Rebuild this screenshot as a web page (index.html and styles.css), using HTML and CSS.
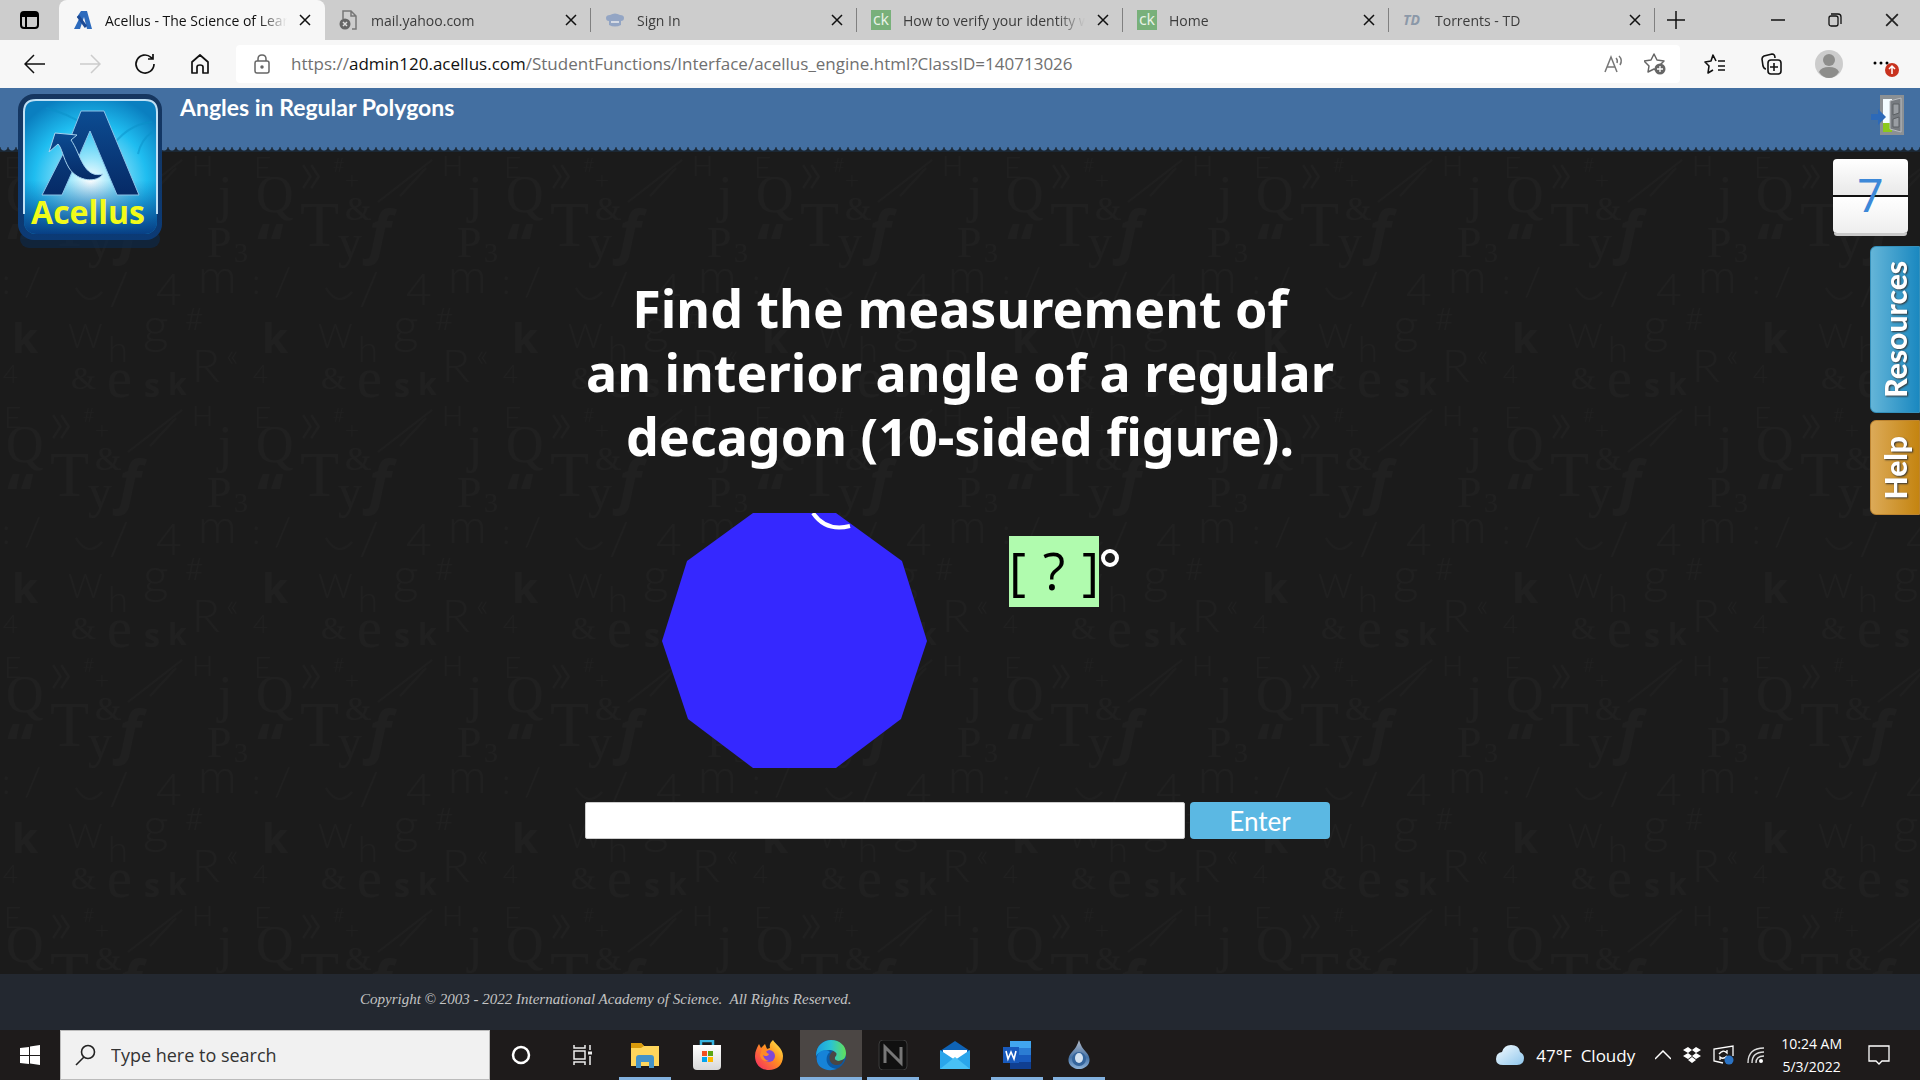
FILE: index.html
```html
<!DOCTYPE html>
<html lang="en">
<head>
<meta charset="utf-8">
<title>Acellus - The Science of Learning</title>
<link rel="stylesheet" href="styles.css">
</head>
<body>
<svg class="sprites" aria-hidden="true">
  <defs>
    <symbol id="i-x" viewBox="0 0 12 12"><path d="M1 1l10 10M11 1L1 11" fill="none" stroke="currentColor" stroke-width="1.5"/></symbol>
    <symbol id="i-a" viewBox="0 0 20 20"><path d="M8 1h6l5 18h-5L11 7 7 19H1L6 9 4 7z" fill="#2d6bbd"/><path d="M5 6l8 11" stroke="#1d4a94" stroke-width="3"/></symbol>
    <linearGradient id="g-navy" x1="0" y1="0" x2="0" y2="1"><stop offset="0" stop-color="#0c4c92"/><stop offset="1" stop-color="#062a66"/></linearGradient>
    <radialGradient id="g-sky" cx=".5" cy=".6" r=".65"><stop offset="0" stop-color="#fff"/><stop offset=".25" stop-color="#9be6fb"/><stop offset=".65" stop-color="#1fbdf0"/><stop offset="1" stop-color="#0a7fc0"/></radialGradient>
    <linearGradient id="g-frame" x1="0" y1="0" x2="0" y2="1"><stop offset="0" stop-color="#16365f"/><stop offset="1" stop-color="#0b3a75"/></linearGradient>
    <linearGradient id="g-shade" x1="0" y1="0" x2="0" y2="1"><stop offset=".6" stop-color="#0a5aa8" stop-opacity="0"/><stop offset="1" stop-color="#083f84"/></linearGradient>
    <linearGradient id="g-fire" x1="1" y1="0" x2="0" y2="1"><stop offset="0" stop-color="#fff44f"/><stop offset=".45" stop-color="#ff9020"/><stop offset="1" stop-color="#f5206a"/></linearGradient>
    <linearGradient id="g-edge" x1="0" y1="0" x2="1" y2="0"><stop offset="0" stop-color="#1b9de2"/><stop offset=".5" stop-color="#2bc3d2"/><stop offset="1" stop-color="#62e05a"/></linearGradient>
    <linearGradient id="g-drop" x1="0" y1="0" x2="0" y2="1"><stop offset="0" stop-color="#b5bcc8"/><stop offset=".6" stop-color="#4774a8"/><stop offset="1" stop-color="#8fb4da"/></linearGradient>
    <linearGradient id="g-cloud" x1="0" y1="0" x2="1" y2="1"><stop offset="0" stop-color="#f4fbff"/><stop offset="1" stop-color="#8fc6ec"/></linearGradient>
    <linearGradient id="g-ms" x1="0" y1="0" x2="0" y2="1"><stop offset="0" stop-color="#fff"/><stop offset="1" stop-color="#d8d8d8"/></linearGradient>
  </defs>
</svg>

<header class="browser">
  <div class="tabbar">
    <button class="tab-menu" aria-label="Tab actions"><svg width="20" height="20" viewBox="0 0 20 20"><rect x="1" y="2" width="17" height="16" rx="3" fill="none" stroke="#000" stroke-width="2"/><path d="M1 3h17v4H1z"/><path d="M6 7v11" stroke="#000" stroke-width="2"/></svg></button>
    <div class="tab tab-active"><svg class="fav"><use href="#i-a"/></svg><span class="tab-title">Acellus - The Science of Learning</span><button class="tab-close" aria-label="Close tab"><svg><use href="#i-x"/></svg></button></div>
    <div class="tab"><svg class="fav" viewBox="0 0 20 20"><path d="M4 9V1h8l5 5v13h-4M12 1v5h5" fill="none" stroke="#777" stroke-width="1.5"/><circle cx="6" cy="14" r="5.500" fill="#666"/><path d="M4 12l4 4M8 12l-4 4" stroke="#ddd" stroke-width="1.500"/></svg><span class="tab-title">mail.yahoo.com</span><button class="tab-close" aria-label="Close tab"><svg><use href="#i-x"/></svg></button></div>
    <div class="tab"><svg class="fav" viewBox="0 0 20 20"><path d="M1 8q0-3 4-3 5-3 10 0 4 0 4 3t-3 3v4q-6 3-12 0v-4q-3 0-3-3z" fill="#93a5c4"/><path d="M6 12h8" stroke="#d5dae4" stroke-width="2"/></svg><span class="tab-title">Sign In</span><button class="tab-close" aria-label="Close tab"><svg><use href="#i-x"/></svg></button></div>
    <div class="tab"><span class="fav fav-ck">ck</span><span class="tab-title">How to verify your identity with us</span><button class="tab-close" aria-label="Close tab"><svg><use href="#i-x"/></svg></button></div>
    <div class="tab"><span class="fav fav-ck">ck</span><span class="tab-title">Home</span><button class="tab-close" aria-label="Close tab"><svg><use href="#i-x"/></svg></button></div>
    <div class="tab"><span class="fav fav-td">TD</span><span class="tab-title">Torrents - TD</span><button class="tab-close" aria-label="Close tab"><svg><use href="#i-x"/></svg></button></div>
    <button class="tab-new" aria-label="New tab"><svg width="18" height="18" viewBox="0 0 18 18"><path d="M9 0v18M0 9h18" stroke="#111" stroke-width="1.500"/></svg></button>
    <div class="window-buttons">
      <button aria-label="Minimize"><svg width="14" height="14" viewBox="0 0 14 14"><path d="M0 7h14" stroke="#111" stroke-width="1.500"/></svg></button>
      <button aria-label="Restore"><svg width="14" height="14" viewBox="0 0 14 14" fill="none" stroke="#111" stroke-width="1.300"><rect x="1" y="3" width="9" height="10" rx="2"/><path d="M3 1h7q3 0 3 3v7"/></svg></button>
      <button aria-label="Close"><svg width="14" height="14" viewBox="0 0 12 12" color="#222"><use href="#i-x"/></svg></button>
    </div>
  </div>
  <nav class="toolbar">
    <div class="nav-buttons">
      <button aria-label="Back"><svg width="22" height="20" viewBox="0 0 22 20" fill="none" stroke="#111" stroke-width="1.500"><path d="M10 1L1 10l9 9M1 10h20"/></svg></button>
      <button aria-label="Forward"><svg width="22" height="20" viewBox="0 0 22 20" fill="none" stroke="#ccc" stroke-width="1.500"><path d="M12 1l9 9-9 9M21 10H1"/></svg></button>
      <button aria-label="Refresh"><svg width="22" height="22" viewBox="0 0 22 22" fill="none" stroke="#111" stroke-width="1.700"><path d="M20 11a9 9 0 1 1-3-6.700L19 6M19 1v5h-5"/></svg></button>
      <button aria-label="Home"><svg width="20" height="20" viewBox="0 0 20 20" fill="none" stroke="#111" stroke-width="1.700"><path d="M2 8l8-7 8 7v11h-5v-6q0-2-3-2t-3 2v6H2z" stroke-linejoin="round"/></svg></button>
    </div>
    <div class="address">
      <svg width="18" height="20" viewBox="0 0 18 20" fill="none" stroke="#666" stroke-width="1.500"><rect x="2" y="7" width="14" height="12" rx="2"/><path d="M5 7V5q0-4 4-4t4 4v2"/><circle cx="9" cy="13" r="1" fill="#666"/></svg>
      <span class="url">https://<b>admin120.acellus.com</b>/StudentFunctions/Interface/acellus_engine.html?ClassID=140713026</span>
      <button aria-label="Read aloud"><svg width="20" height="20" viewBox="0 0 20 20" fill="none" stroke="#777" stroke-width="1.500"><path d="M1 18L7 3l6 15M3 13h8M12 4q2 2 1 5M15 2q4 4 1 9"/></svg></button>
      <button aria-label="Add to favorites"><svg width="22" height="22" viewBox="0 0 22 22"><path d="M10 1l3 6 7 1-5 5 1 6-6-3-6 3 1-6-5-5 7-1z" fill="none" stroke="#666" stroke-width="1.500" stroke-linejoin="round"/><circle cx="16" cy="16" r="5.500" fill="#666"/><path d="M16 13v6M13 16h6" stroke="#fff" stroke-width="1.300"/></svg></button>
    </div>
    <div class="tool-buttons">
      <button aria-label="Favorites"><svg width="22" height="20" viewBox="0 0 22 20" fill="none" stroke="#111" stroke-width="1.600"><path d="M12 7l-3-6-2 6-6 1 4 4-1 7 5-3M14 7h7M14 12h7M14 16h7" stroke-linejoin="round"/></svg></button>
      <button aria-label="Collections"><svg width="22" height="22" viewBox="0 0 22 22" fill="none" stroke="#111" stroke-width="1.600"><path d="M5 16q-2 0-3-3L1 6q0-2 2-3l8-2q3 0 3 4"/><rect x="7" y="7" width="13" height="14" rx="3"/><path d="M13 10v8M9 14h8"/></svg></button>
      <button aria-label="Profile"><svg width="28" height="28" viewBox="0 0 28 28"><circle cx="14" cy="14" r="14" fill="#ccc"/><circle cx="14" cy="10" r="6" fill="#8d8d8b"/><path d="M4 22q2-5 10-5t10 5q-4 6-10 6T4 22z" fill="#8d8d8b"/></svg></button>
      <button aria-label="Settings"><svg width="28" height="28" viewBox="0 0 28 28"><circle cx="3" cy="13" r="1.500"/><circle cx="9" cy="13" r="1.500"/><circle cx="15" cy="13" r="1.500"/><circle cx="20" cy="20" r="7" fill="#c8321e"/><path d="M20 24v-8M17 19l3-3 3 3" fill="none" stroke="#fff" stroke-width="1.500"/></svg></button>
    </div>
  </nav>
</header>

<div class="lesson">
  <header class="lesson-header">
    <h1>Angles in Regular Polygons</h1>
    <button class="exit" aria-label="Exit"><svg width="36" height="42" viewBox="0 0 36 42"><path d="M9 0h24v40H9z" fill="#8b9094"/><path d="M12 4h9v26h-9z" fill="#f2fbff"/><path d="M12 28h9v9h-9z" fill="#8cc81c"/><path d="M19 6l11-3v34l-11-3z" fill="#777b80" stroke="#b9bcc0"/><path d="M22 9h6v9l-6 2zM22 24l6-2v10h-6z" fill="#9a9ea3" stroke="#5d6165"/><path d="M0 19h7v-5l8 8-8 8v-5H0z" fill="#2c69b8"/></svg></button>
    <svg class="logo" viewBox="0 0 144 156" role="img" aria-label="Acellus">
      <rect x="2" y="136" width="140" height="18" rx="9" fill="#0c2c50" opacity=".6"/>
      <rect width="144" height="146" rx="16" fill="url(#g-frame)"/>
      <rect x="6" y="6" width="133" height="134" rx="12" fill="url(#g-sky)"/>
      <rect x="6" y="6" width="133" height="134" rx="12" fill="url(#g-shade)"/>
      <path d="M28 14q46 12 62 44Q108 30 134 28M120 60q3-14 14-22" fill="none" stroke="#0a8fc8" stroke-width="2" opacity=".5"/>
      <path d="M6 120V18Q6 6 18 6h109q12 0 12 12v102" fill="none" stroke="#bfe0f5" stroke-width="2"/>
      <path d="M63 17h23l35 84H99L72 37 44 101H24l26-51z" fill="url(#g-navy)" stroke="#8ac3e8"/>
      <path d="M37 39l22 2-6 5c10 14 12 39 32 34-6 9-25 8-34-6-6-10-7-20-11-24l-9 8z" fill="url(#g-navy)" stroke="#a5d2ee"/>
      <text class="logo-name" x="70" y="130">Acellus</text>
    </svg>
  </header>

  <main class="stage">
    <svg class="wallpaper" aria-hidden="true">
      <pattern id="glyphs" width="250" height="250" patternUnits="userSpaceOnUse">
        <g class="sans"><text x="48" y="43" font-size="64">»</text><text x="95" y="38" font-size="24">+</text><text x="198" y="143" font-size="48">m</text><text x="2" y="144" font-size="36">:</text><text x="24" y="146" font-size="40">/</text><text x="109" y="155" font-size="46">/</text><text x="156" y="155" font-size="44">4</text><text x="185" y="180" font-size="32">#</text><text x="68" y="198" font-size="34">W</text><text x="108" y="212" font-size="36">h</text><text x="143" y="193" font-size="50">g</text><text x="192" y="232" font-size="46">R</text><text x="226" y="216" font-size="32">«</text><text x="3" y="233" font-size="26">4</text><text x="4" y="28" font-size="30">E</text><text x="192" y="26" font-size="28">H</text><text x="83" y="22" font-size="20">#</text></g>
        <g class="serif"><text x="6" y="62" font-size="52">Q</text><text x="50" y="96" font-size="64">T</text><text x="95" y="70" font-size="34">&amp;</text><text x="88" y="108" font-size="48">y</text><text x="207" y="107" font-size="44">P</text><text x="234" y="112" font-size="28">3</text><text x="218" y="62" font-size="52">j</text><text x="71" y="239" font-size="32">&amp;</text><text x="107" y="247" font-size="56">e</text></g>
        <g class="heavy"><text x="119" y="102" font-size="58" font-style="italic">f</text><text x="7" y="118" font-size="60">“</text><text x="12" y="203" font-size="42">k</text><text x="168" y="245" font-size="30">k</text><text x="144" y="247" font-size="32">s</text></g>
        <path d="M128 52L182 10M150 46L176 18M76 138q12 20 26 4"/>
      </pattern>
      <rect width="100%" height="100%" fill="url(#glyphs)"/>
    </svg>

    <section class="problem">
      <p class="question">Find the measurement of<br>an interior angle of a regular<br>decagon (10-sided figure).</p>
      <div class="figure-row">
        <svg width="266" height="256" viewBox="0 0 266 256" role="img" aria-label="Regular decagon">
          <path d="M91 0h83l66 48 25 80-26 78-65 49H91l-65-49L0 128l25-80z" fill="#3528ff"/>
          <path d="M151 0q13 19 37 13" fill="none" stroke="#fff" stroke-width="4"/>
        </svg>
        <div class="unknown"><span class="blank"><span>[</span><span>?</span><span>]</span></span><svg width="20" height="20" viewBox="0 0 20 20" role="img" aria-label="degrees"><circle cx="10" cy="10" r="7" fill="none" stroke="#fff" stroke-width="4"/></svg></div>
      </div>
      <form class="answer"><input type="text" aria-label="Answer"><button type="button">Enter</button></form>
    </section>

    <aside class="side">
      <div class="counter"><span>7</span></div>
      <button class="side-tab resources"><span>Resources</span></button>
      <button class="side-tab help"><span>Help</span></button>
    </aside>
  </main>

  <footer class="copyright">Copyright © 2003 - 2022 International Academy of Science.&nbsp; All Rights Reserved.</footer>
</div>

<footer class="taskbar">
  <button class="start" aria-label="Start"><svg width="20" height="20" viewBox="0 0 20 20" fill="#fff"><path d="M0 3l9-1v8H0zM10 1.500L20 0v10H10zM0 11h9v8l-9-1zM10 11h10v9l-10-1.500z"/></svg></button>
  <label class="search"><svg width="22" height="22" viewBox="0 0 22 22" fill="none" stroke="#222" stroke-width="1.600"><circle cx="13" cy="8" r="6.500"/><path d="M9 13l-8 8"/></svg><input type="text" placeholder="Type here to search" aria-label="Search"></label>
  <div class="apps">
    <button aria-label="Cortana"><svg width="20" height="20" viewBox="0 0 20 20"><circle cx="10" cy="10" r="8" fill="none" stroke="#fff" stroke-width="2.500"/></svg></button>
    <button aria-label="Task view"><svg width="20" height="20" viewBox="0 0 20 20" fill="none" stroke="#eee" stroke-width="1.500"><path d="M1 0v3h11V0M1 20v-3h11v3M1 6h11v8H1zM17 0v5M17 11v9"/><path d="M15 8h4" stroke-width="3"/></svg></button>
    <button class="open" aria-label="File Explorer"><svg width="28" height="26" viewBox="0 0 28 26"><path d="M0 1h10l3 3h15v20H0z" fill="#ffd65c"/><path d="M0 1h10l3 3-3 2H0z" fill="#d99a0b"/><path d="M5 26V16q0-3 3-3h12q3 0 3 3v10h-5v-6h-8v6z" fill="#4593c8"/></svg></button>
    <button aria-label="Microsoft Store"><svg width="28" height="30" viewBox="0 0 28 30"><path d="M8 6V1h12v5" fill="none" stroke="#36b3e0" stroke-width="2.500"/><path d="M0 5h28v21q0 4-4 4H4q-4 0-4-4z" fill="url(#g-ms)"/><path d="M9 11h5v5H9z" fill="#f25022"/><path d="M15 11h5v5h-5z" fill="#5ca614"/><path d="M9 17h5v5H9z" fill="#00a4ef"/><path d="M15 17h5v5h-5z" fill="#ffb900"/></svg></button>
    <button aria-label="Firefox"><svg width="28" height="30" viewBox="0 0 28 30"><path d="M14 30C5 30 0 24 0 16c0-5 2-8 4-12l2 4 4-4 2 5 3-1c-1-4 1-6 3-8 2 4 10 8 10 16 0 9-6 14-14 14z" fill="url(#g-fire)"/><circle cx="14" cy="16" r="6" fill="#8048d8"/><path d="M7 9q4-2 7 1c-4 1-3 3 0 4-1 3-5 2-6 1q1 5 6 6-8 1-9-6z" fill="#ff8a26"/></svg></button>
    <button class="open current" aria-label="Microsoft Edge"><svg width="30" height="32" viewBox="0 0 30 32"><circle cx="15" cy="16" r="15" fill="#0c59a4"/><path d="M0 17C0 6 8 1 15 1c9 0 15 6 15 13 0 6-4 8-8 8-4-1-4-2-3-4 2-3 0-7-5-7C7 11 2 14 0 17z" fill="url(#g-edge)"/><path d="M1 18c1-6 8-9 13-5-5 3-6 16 7 17C9 34-1 27 1 18z" fill="#1683d8"/><path d="M17 12q6 2 2 6-1 3 3 4 3 0 6-2-1 3-3 5-8 3-11-3-2-6 3-10z" fill="#4b4644"/></svg></button>
    <button class="open" aria-label="Notes"><svg width="30" height="30" viewBox="0 0 30 30"><rect x="1" width="28" height="30" rx="4" fill="#101010" stroke="#3a3a3a"/><path d="M7 23V7l16 16V7" fill="none" stroke="#777" stroke-width="3"/></svg></button>
    <button aria-label="Mail"><svg width="30" height="30" viewBox="0 0 30 30"><path d="M0 11L15 1l15 10v4H0z" fill="#0f63b5"/><path d="M3 10h24v12H3z" fill="#fff"/><path d="M0 10l15 10 15-10v19H0z" fill="#2aa5ea"/><path d="M0 29l15-12 15 12z" fill="#48c0f5"/></svg></button>
    <button class="open" aria-label="Word"><svg width="28" height="28" viewBox="0 0 28 28"><path d="M7 0h21v7H7z" fill="#41a5ee"/><path d="M7 7h21v7H7z" fill="#2b7cd3"/><path d="M7 14h21v7H7z" fill="#185abd"/><path d="M7 21h21v7H7z" fill="#103f91"/><rect y="6" width="16" height="16" fill="#185abd"/><path d="M3 10l2 8 3-7 3 7 2-8" fill="none" stroke="#fff" stroke-width="1.600"/></svg></button>
    <button class="open" aria-label="Rainmeter"><svg width="22" height="30" viewBox="0 0 22 30"><path d="M11 0q2 7 7 12c8 9 1 17-7 17S-4 21 4 12q5-5 7-12z" fill="url(#g-drop)"/><circle cx="11" cy="19" r="7" fill="#35659c"/><ellipse cx="11" cy="18" rx="4" ry="5" fill="#d5e3f1"/></svg></button>
  </div>
  <div class="tray">
    <div class="weather"><svg width="28" height="20" viewBox="0 0 28 20"><path d="M7 20q-7 0-7-6t6-7q2-7 9-7 8 0 9 7 4 2 4 6 0 7-7 7z" fill="url(#g-cloud)"/></svg><span>47°F&nbsp; Cloudy</span></div>
    <svg width="16" height="10" viewBox="0 0 16 10"><path d="M0 9l8-8 8 8" fill="none" stroke="#fff" stroke-width="1.500"/></svg>
    <svg width="18" height="16" viewBox="0 0 18 16" fill="#fff"><path d="M5 0l4 3-4 3-5-3zM13 0l5 3-5 3-4-3zM5 6l4 3-4 3-5-3zM13 6l5 3-5 3-4-3zM9 10l4 3-4 3-4-3z"/></svg>
    <svg width="22" height="20" viewBox="0 0 22 20" fill="none" stroke="#fff" stroke-width="1.300"><path d="M10 18L1 16V4l19-3v10M6 9q4-5 8-1V5M14 11q-4 4-7 1v3"/><circle cx="16" cy="15" r="4.500" fill="#2b73c4" stroke="none"/></svg>
    <svg width="18" height="16" viewBox="0 0 18 16" fill="none" stroke="#ddd" stroke-width="1.400"><path d="M1 16Q1 1 17 1M5 16Q5 5 17 5M9 16q0-7 8-7"/><circle cx="14" cy="14" r="2" fill="#fff" stroke="none"/></svg>
    <div class="clock"><span>10:24 AM</span><span>5/3/2022</span></div>
    <svg width="22" height="22" viewBox="0 0 22 22"><path d="M1 2h20v15h-7l-3 3-3-3H1z" fill="none" stroke="#fff" stroke-width="1.300"/></svg>
  </div>
</footer>
</body>
</html>
```
FILE: styles.css
```css
* { box-sizing: border-box; }

body {
  margin: 0;
  min-height: 100vh;
  display: flex;
  flex-direction: column;
  background: #1b1b1b;
  font-family: "Open Sans", "Noto Sans", sans-serif;
}

button {
  padding: 0;
  border: 0;
  background: none;
  font: inherit;
  color: inherit;
}

svg { display: block; flex: none; }
.sprites { position: absolute; width: 0; height: 0; }

/* Browser frame */
.tabbar {
  display: flex;
  height: 40px;
  background: #cdcdcd;
  font-size: 14px;
  color: #3c3c3c;
}
.tab-menu { width: 59px; display: grid; place-items: center; }
.tab {
  flex: 0 1 266px;
  min-width: 0;
  display: flex;
  align-items: center;
  gap: 12px;
  padding: 0 14px;
  background: linear-gradient(#808080, #808080) right 8px / 1px 24px no-repeat;
}
.tab-active {
  background: #f7f7f7;
  border-radius: 8px 8px 0 0;
  color: #111;
}
.fav { width: 20px; height: 20px; flex: none; }
.fav-ck {
  background: #78b07a;
  color: #e8f3e8;
  font-size: 16px;
  line-height: 18px;
  text-align: center;
}
.fav-td {
  color: #8b98a8;
  font-size: 14px;
  line-height: 20px;
  font-weight: 700;
  font-style: italic;
}
.tab-title {
  flex: 1;
  min-width: 0;
  overflow: hidden;
  white-space: nowrap;
  mask-image: linear-gradient(to left, transparent, #000 28px);
}
.tab-close { color: #111; }
.tab-close svg { width: 12px; height: 12px; }
.tab-new { width: 42px; display: grid; place-items: center; }
.window-buttons { display: flex; margin-left: auto; }
.window-buttons button { width: 57px; display: grid; place-items: center; }

.toolbar {
  display: flex;
  align-items: center;
  height: 48px;
  background: #f7f7f7;
}
.nav-buttons { display: flex; padding: 0 9px 0 7px; }
.nav-buttons button { width: 55px; display: grid; place-items: center; }
.address {
  flex: 1;
  min-width: 0;
  display: flex;
  align-items: center;
  gap: 20px;
  height: 38px;
  padding: 0 14px 0 17px;
  border-radius: 4px;
  background: #fff;
}
.url {
  flex: 1;
  min-width: 0;
  overflow: hidden;
  white-space: nowrap;
  font-size: 17px;
  line-height: 24px;
  color: #707070;
}
.url b { font-weight: 400; color: #111; }
.tool-buttons { display: flex; padding: 0 6px; }
.tool-buttons button { width: 57px; display: grid; place-items: center; }

/* Lesson */
.lesson { flex: 1; display: flex; flex-direction: column; }
.lesson-header {
  position: relative;
  z-index: 1;
  display: flex;
  justify-content: space-between;
  height: 62px;
  padding: 7px 13px 0 180px;
  background: #436fa1;
}
.lesson-header::after {
  content: "";
  position: absolute;
  left: 0;
  right: 0;
  bottom: -2px;
  height: 5px;
  background: radial-gradient(circle at 4px 0, #436fa1 3px, #1b2733 4px) 0 0 / 8px 5px;
}
.lesson-header h1 {
  margin: 0;
  font: 700 23px/24px Lato, sans-serif;
  color: #fff;
}
.exit { align-self: flex-start; }
.logo {
  position: absolute;
  z-index: 1;
  left: 18px;
  top: 6px;
  width: 144px;
  height: 156px;
}
.logo-name {
  font: 700 32px "Open Sans", sans-serif;
  fill: #f2fb1a;
  text-anchor: middle;
}

.stage {
  position: relative;
  flex: 1;
  display: grid;
  grid-template-columns: 1fr 750px 1fr;
  background: #1b1b1b;
}
.wallpaper {
  position: absolute;
  inset: 0;
  width: 100%;
  height: 100%;
  fill: #202020;
}
.wallpaper path { fill: none; stroke: #1f1f1f; stroke-width: 2; }
.wallpaper .sans { font-family: Lato, sans-serif; font-weight: 300; }
.wallpaper .serif { font-family: "Liberation Serif", serif; }
.wallpaper .heavy { font-family: "Open Sans", sans-serif; font-weight: 700; }

.problem {
  position: relative;
  grid-column: 2;
  padding-top: 126px;
}
.question {
  margin: 0;
  font: 700 52px/64px "Noto Sans", sans-serif;
  color: #fff;
  text-align: center;
  white-space: nowrap;
}
.figure-row {
  display: flex;
  gap: 81px;
  padding: 45px 0 33px 77px;
}
.unknown {
  display: flex;
  gap: 1px;
  padding-top: 23px;
}
.unknown svg { margin-top: 12px; }
.blank {
  display: flex;
  justify-content: space-between;
  width: 90px;
  height: 71px;
  background: #b0fbae;
  color: #000;
  font-size: 52px;
  line-height: 68px;
}
.answer { display: flex; gap: 5px; }
.answer input {
  width: 600px;
  height: 37px;
  padding: 0 8px;
  border: 1px solid #ccc;
  border-radius: 2px;
  background: #fff;
  font: 24px Lato, sans-serif;
}
.answer button {
  width: 140px;
  height: 37px;
  border-radius: 4px;
  background: #5bb8e3;
  color: #fff;
  font: 26px/36px Lato, sans-serif;
}

.side {
  position: relative;
  grid-column: 3;
  justify-self: end;
  display: flex;
  flex-direction: column;
  align-items: flex-end;
  padding-top: 9px;
}
.counter {
  width: 75px;
  height: 74px;
  margin: 0 12px 13px 0;
  border-radius: 4px;
  background: linear-gradient(transparent 36px, #111 36px 38px, transparent 38px), linear-gradient(#fff, #e9e9e9 36px, #fff 38px, #eee);
  box-shadow: 0 4px 0 -1px #c9c9c9;
  font: 46px/74px Roboto, sans-serif;
  color: #3c88d8;
  text-align: center;
}
.side-tab {
  width: 50px;
  display: grid;
  place-items: center;
  border-radius: 6px 0 0 6px;
  font: 900 30px/32px Lato, sans-serif;
  color: #fff;
  text-shadow: -1px 1px 2px #333;
}
.side-tab span { writing-mode: vertical-rl; rotate: 180deg; }
.resources {
  height: 167px;
  margin-bottom: 7px;
  background: linear-gradient(90deg, #64b5d8, #1a88c0);
  border: 1px solid #3590bb;
}
.help {
  height: 95px;
  background: linear-gradient(90deg, #dcaa58, #c48410);
  border: 1px solid #bd8430;
}

.copyright {
  height: 56px;
  padding-left: 360px;
  background: #232830;
  color: #c4c4c4;
  font: italic 15px/50px "Liberation Serif", serif;
}

/* Taskbar */
.taskbar {
  display: flex;
  height: 50px;
  background: #1e1b1b;
  color: #fff;
}
.taskbar button { display: grid; place-items: center; }
.start { width: 60px; }
.search {
  flex: 0 1 430px;
  display: flex;
  align-items: center;
  gap: 12px;
  padding: 0 14px;
  background: #f1f1f1;
  border: 1px solid #bbb;
}
.search input {
  flex: 1;
  min-width: 0;
  padding: 0 2px;
  border: 0;
  outline: 0;
  background: none;
  font: 18px/24px "Open Sans", sans-serif;
  color: #333;
}
.search input::placeholder { color: #333; }
.apps { display: flex; }
.apps button { width: 62px; height: 50px; }
.apps .open { background: linear-gradient(#82b1df, #82b1df) center bottom / 52px 3px no-repeat; }
.apps .current { background: linear-gradient(#82b1df, #82b1df) center bottom / 62px 3px no-repeat #4b4644; }
.tray {
  display: flex;
  align-items: center;
  gap: 12px;
  margin-left: auto;
  padding-right: 30px;
}
.weather { display: flex; align-items: center; gap: 12px; margin-right: 8px; font-size: 17px; white-space: nowrap; }
.clock {
  display: grid;
  justify-items: center;
  margin: 0 14px 0 4px;
  font-size: 14px;
  line-height: 23px;
  white-space: nowrap;
}
```
